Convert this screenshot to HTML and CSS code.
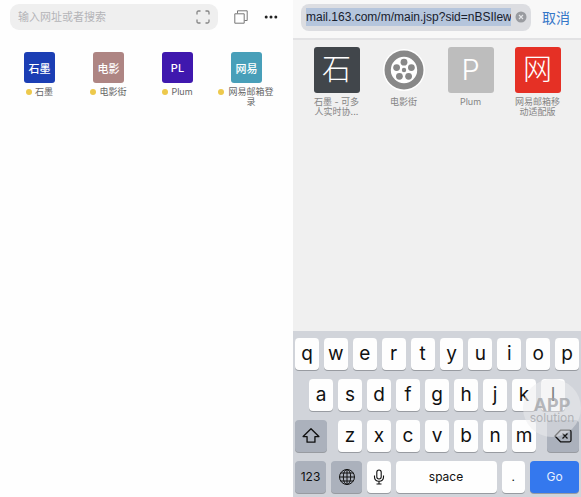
FILE: index.html
```
<!DOCTYPE html>
<html lang="zh-CN">
<head>
  <meta charset="UTF-8">
  <title>书签</title>
  <meta name="viewport" content="width=device-width, initial-scale=1.0" />
  <link rel="stylesheet" href="styles.css">
</head>
<body>
  <div class="screens">
    <section class="screen home">
      <header class="home-bar">
        <div class="search">
          <input type="text" placeholder="输入网址或者搜索" aria-label="输入网址或者搜索">
          <button class="icon-btn" aria-label="扫码">
            <svg width="14" height="14" viewBox="0 0 14 14" fill="none" stroke="#858585" stroke-width="1.3"><path d="M1 4.5V2.5Q1 1 2.5 1H4.5M9.5 1H11.5Q13 1 13 2.5V4.5M13 9.5V11.5Q13 13 11.5 13H9.5M4.5 13H2.5Q1 13 1 11.5V9.5"/></svg>
          </button>
        </div>
        <button class="icon-btn" aria-label="标签页">
          <svg width="14" height="14" viewBox="0 0 14 14" fill="none" stroke="#777" stroke-width="1"><path d="M.8 3.8H10.2V13.2H.8ZM3.5 3.5V.8H13.2V10.5H10.5"/></svg>
        </button>
        <button class="icon-btn" aria-label="更多">
          <svg width="14" height="14" viewBox="0 0 14 14" fill="#222"><circle cx="2.2" cy="7" r="1.5"/><circle cx="7" cy="7" r="1.5"/><circle cx="11.8" cy="7" r="1.5"/></svg>
        </button>
      </header>
      <nav class="shortcuts">
        <a href="#"><span class="tile blue">石墨</span><span class="name"><i class="dot"></i><span>石墨</span></span></a>
        <a href="#"><span class="tile rose">电影</span><span class="name"><i class="dot"></i><span>电影街</span></span></a>
        <a href="#"><span class="tile purple">PL</span><span class="name"><i class="dot"></i><span>Plum</span></span></a>
        <a href="#"><span class="tile teal">网易</span><span class="name"><i class="dot"></i><span>网易邮箱登录</span></span></a>
      </nav>
    </section>

    <section class="screen safari">
      <header class="url-bar">
        <div class="url">
          <input type="text" value="mail.163.com/m/main.jsp?sid=nBSIlewv" aria-label="网址">
          <button class="icon-btn" aria-label="清除">
            <svg width="12" height="12" viewBox="0 0 12 12"><circle cx="6" cy="6" r="5.5" fill="#999ba0"/><path d="M4 4L8 8M8 4L4 8" stroke="#e4e5e8" stroke-width="1.1"/></svg>
          </button>
        </div>
        <button class="cancel">取消</button>
      </header>
      <nav class="favorites">
        <a href="#"><span class="fav dark">石</span><span class="fav-name">石墨 - 可多<br>人实时协...</span></a>
        <a href="#">
          <span class="fav reel">
            <svg width="42" height="42" viewBox="0 0 42 42"><circle cx="21" cy="21" r="21" fill="#fff"/><circle cx="21" cy="21" r="19.5" fill="#888"/><circle cx="21" cy="21" r="13.2" fill="#fff"/><g fill="#888"><circle cx="21" cy="21" r="2.2"/><circle cx="21" cy="13.2" r="3.4"/><circle cx="28.4" cy="18.6" r="3.4"/><circle cx="25.6" cy="27.3" r="3.4"/><circle cx="16.4" cy="27.3" r="3.4"/><circle cx="13.6" cy="18.6" r="3.4"/></g></svg>
          </span>
          <span class="fav-name">电影街</span>
        </a>
        <a href="#"><span class="fav gray">P</span><span class="fav-name">Plum</span></a>
        <a href="#"><span class="fav red">网</span><span class="fav-name">网易邮箱移<br>动适配版</span></a>
      </nav>

      <div class="keyboard">
        <div class="row">
          <button>q</button><button>w</button><button>e</button><button>r</button><button>t</button><button>y</button><button>u</button><button>i</button><button>o</button><button>p</button>
        </div>
        <div class="row middle">
          <button>a</button><button>s</button><button>d</button><button>f</button><button>g</button><button>h</button><button>j</button><button>k</button><button>l</button>
        </div>
        <div class="row">
          <button class="mod wide" aria-label="shift">
            <svg width="18" height="18" viewBox="0 0 16 16" fill="none" stroke="#111" stroke-width="1.2" stroke-linejoin="round"><path d="M8 1.5L15 8.5H11.5V13.5H4.5V8.5H1Z"/></svg>
          </button>
          <div class="row letters">
            <button>z</button><button>x</button><button>c</button><button>v</button><button>b</button><button>n</button><button>m</button>
          </div>
          <button class="mod wide" aria-label="delete">
            <svg width="18" height="14" viewBox="0 0 18 14" fill="none" stroke="#111" stroke-width="1.3" stroke-linejoin="round"><path d="M6.5 1.2H15.5Q17 1.2 17 2.7V11.3Q17 12.8 15.5 12.8H6.5L1 7ZM8.5 4.5L13.5 9.5M13.5 4.5L8.5 9.5"/></svg>
          </button>
        </div>
        <div class="row">
          <button class="mod text">123</button>
          <button class="mod text" aria-label="globe">
            <svg width="18" height="18" viewBox="0 0 18 18" fill="none" stroke="#111" stroke-width="1"><circle cx="9" cy="9" r="7.5"/><ellipse cx="9" cy="9" rx="3.7" ry="7.5"/><path d="M9 1.5V16.5M1.5 9H16.5M2.7 5H15.3M2.7 13H15.3"/></svg>
          </button>
          <button aria-label="dictate">
            <svg width="12" height="16" viewBox="0 0 12 16" fill="none" stroke="#111" stroke-width="1.1"><rect x="3.8" y="1" width="4.4" height="9" rx="2.2"/><path d="M1.5 6.5V8Q1.5 12.2 6 12.2T10.5 8V6.5M6 12.2V15M3.5 15H8.5"/></svg>
          </button>
          <button class="space">space</button>
          <button class="period">.</button>
          <button class="go">Go</button>
        </div>
        <div class="watermark"><b>APP</b><span>solution</span></div>
      </div>
    </section>
  </div>
</body>
</html>
```
FILE: styles.css
```
* { box-sizing: border-box; }
body { margin: 0; background: #fff; font-family: Inter, "Noto Sans CJK SC", sans-serif; }
button, input { font-family: inherit; border: none; padding: 0; margin: 0; }
button { background: none; cursor: pointer; }
a { color: inherit; text-decoration: none; }
svg { display: block; }
.screens { display: grid; grid-template-columns: 293fr 288fr; min-height: 100vh; }
.screen { display: flex; flex-direction: column; min-width: 0; }
.icon-btn { flex: none; }

/* start page */
.home { background: #fefefe; }
.home-bar { display: flex; align-items: center; gap: 16px; padding: 4px 15px 0 10px; }
.search { flex: 1; display: flex; align-items: center; height: 26px; padding: 0 8px; border-radius: 9px; background: #efefef; }
.search input { flex: 1; min-width: 0; background: none; font-size: 11px; outline: none; }
.search input::placeholder { color: #b4b4b8; }
.shortcuts { display: grid; grid-template-columns: repeat(4, 1fr); padding: 22px 12px 0 5px; }
.shortcuts a { display: flex; flex-direction: column; align-items: center; gap: 4px; }
.tile { display: flex; align-items: center; justify-content: center; width: 31px; height: 31px; border-radius: 3px; color: #fff; font-size: 11px; font-weight: 500; }
.blue { background: #1b3eb4; }
.rose { background: #ae8583; }
.purple { background: #3f18ae; }
.teal { background: #489fb9; }
.name { display: flex; gap: 3px; max-width: 58px; color: #666; font-size: 9px; line-height: 10px; text-align: center; }
.dot { flex: none; width: 6px; height: 6px; margin-top: 2px; border-radius: 50%; background: #edc94c; }

/* address bar + favorites */
.safari { background: #f0f0f0; }
.url-bar { display: flex; align-items: center; gap: 11px; height: 40px; padding: 0 11px 4px 8px; background: #f8f8f8; border-bottom: 2px solid #e2e2e4; }
.url { flex: 1; display: flex; align-items: center; gap: 4px; min-width: 0; height: 27px; padding: 0 4px 0 5px; border-radius: 8px; background: #dcdde1; }
.url input { flex: 1; min-width: 0; height: 18px; background: #b5c5dc; color: #18202c; font-family: "Liberation Sans", sans-serif; font-size: 12px; outline: none; }
.cancel { flex: none; color: #3577c8; font-size: 14px; }
.favorites { display: grid; grid-template-columns: repeat(4, 1fr); padding: 7px 10px 0; }
.favorites a { display: flex; flex-direction: column; align-items: center; gap: 4px; }
.fav { display: flex; align-items: center; justify-content: center; width: 46px; height: 46px; border-radius: 3px; color: #fff; font-size: 29px; font-weight: 300; line-height: 46px; }
.dark { background: #41464b; }
.gray { background: #bdbdbd; }
.red { background: #e53025; }
.fav-name { color: #858585; font-size: 9px; line-height: 10px; text-align: center; }

/* keyboard */
.keyboard { position: relative; display: flex; flex-direction: column; gap: 9px; margin-top: auto; padding: 7px 2px 4px; background: #d1d4da; }
.row { display: flex; gap: 5px; }
.row button { flex: 1 1 0; display: flex; align-items: center; justify-content: center; min-width: 0; height: 32px; border-radius: 4px; background: #fefefe; box-shadow: 0 1px 0 #989ba1; color: #111; font-size: 19px; line-height: 28px; }
.middle { padding: 0 14px; }
.letters { flex: 1; margin: 0 6px; }
.row .mod { background: #abb1bc; }
.row .wide { flex: 0 0 32px; }
.row .text { flex: 0 0 31px; font-size: 12px; }
.row .space { flex: 0 1 101px; font-size: 12px; }
.row .period { font-size: 12px; }
.row .go { flex: 0 0 49px; background: #3478ee; color: #e8f0ff; font-size: 12px; }
.watermark { position: absolute; right: 0; top: 48px; display: flex; flex-direction: column; align-items: center; width: 58px; height: 58px; padding-top: 19px; border-radius: 50%; background: rgba(235, 235, 237, 0.5); color: rgba(160, 162, 166, 0.75); font-size: 12px; line-height: 11px; pointer-events: none; }
.watermark b { font-size: 18px; line-height: 14px; }
```
